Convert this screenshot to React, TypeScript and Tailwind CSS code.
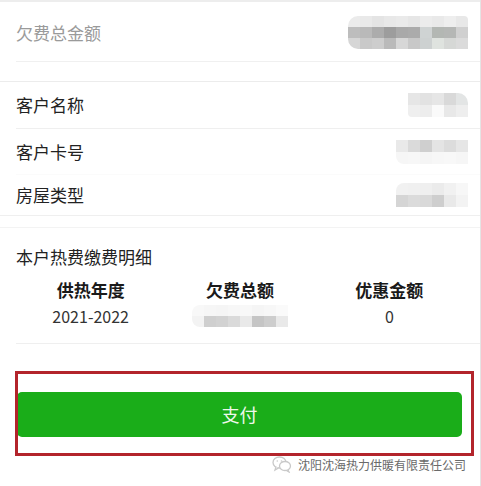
import React from "react";

type Mos = { rows: string[][]; cw: number; ch: number; round?: string };

const total: Mos = {
  cw: 12,
  ch: 11,
  round: "rounded-l-[10px] rounded-tr-[4px]",
  rows: [
    ["#ebebeb", "#e9e9e9", "#e4e4e4", "#e8e8e8", "#eaeaea", "#e6e6e6", "#ececec", "#e9e9e9", "#eeeeee", "#e8e8e8"],
    ["#bdbdbd", "#b9b9b9", "#acacac", "#9d9d9d", "#a9a9a9", "#ababab", "#cfd3d3", "#b3b7b3", "#b5b7b5", "#d0d0d0"],
    ["#d6d6d6", "#c9c9c9", "#cdcdcd", "#bababa", "#d7d7d7", "#c8c8c8", "#cdd1d1", "#dfe3df", "#d6d8d6", "#dbdbdb"],
  ],
};

const name: Mos = {
  cw: 12,
  ch: 12,
  round: "rounded-tr-[10px] rounded-bl-[4px]",
  rows: [
    ["#e6e6e6", "#e2e2e2", "#e6e6e6", "#d9d9d9", "#e3e5e5"],
    ["#efefef", "#ededed", "#fafafa", "#e8e8e8", "#eeeeee"],
  ],
};

const card: Mos = {
  cw: 12,
  ch: 12,
  round: "rounded-bl-[8px]",
  rows: [
    ["#e9e9e9", "#dadada", "#cfcfcf", "#e4e4e4", "#dcdcdc", "#e6e6e6"],
    ["#f6f6f6", "#f7f7f7", "#f5f5f5", "#f7f7f7", "#f8f8f8", "#f6f6f6"],
  ],
};

const house: Mos = {
  cw: 12,
  ch: 12,
  round: "rounded-tl-[8px]",
  rows: [
    ["#f1f1f1", "#f0f0f0", "#efefef", "#ebebeb", "#f1f1f1", "#f7f7f7"],
    ["#d5d5d5", "#dbdbdb", "#d9d9d9", "#cecece", "#e9e9e9", "#f3f3f3"],
  ],
};

const owed: Mos = {
  cw: 12,
  ch: 11,
  round: "rounded-l-[8px]",
  rows: [
    ["#f8f8f8", "#f6f6f6", "#f5f5f5", "#f7f7f7", "#f8f8f8", "#f5f5f5", "#f7f7f7", "#fafafa"],
    ["#f3f3f3", "#cfcfcf", "#d2d2d2", "#dadada", "#e9e9e9", "#c5c5c5", "#cdcdcd", "#e9e9e9"],
  ],
};

function Mosaic({ m }: { m: Mos }) {
  return (
    <div className={`flex flex-col overflow-hidden ${m.round ?? ""}`}>
      {m.rows.map((r, i) => (
        <div key={i} className="flex">
          {r.map((c, j) => (
            <span key={j} style={{ backgroundColor: c, width: m.cw, height: m.ch }} />
          ))}
        </div>
      ))}
    </div>
  );
}

function Row({ label, m, h, pt = 0, muted }: { label: string; m: Mos; h: number; pt?: number; muted?: boolean }) {
  return (
    <div
      className={`flex items-center justify-between pl-4 pr-3 text-[17px] ${muted ? "text-[#9a9a9a]" : "text-[#222]"}`}
      style={{ height: h, paddingTop: pt }}
    >
      <span>{label}</span>
      <Mosaic m={m} />
    </div>
  );
}

function WechatMark() {
  return (
    <svg width="20" height="17" viewBox="0 0 20 17" fill="none" stroke="#c9c9c9" strokeWidth="1.3">
      <ellipse cx="7.5" cy="6.5" rx="6.5" ry="5.5" fill="#fff" />
      <path d="M4 11 L3 14 L6.5 12" fill="#fff" />
      <ellipse cx="13" cy="10" rx="5.5" ry="4.5" fill="#fff" />
      <path d="M16 14 L17 16 L14 14.3" />
      <circle cx="5.3" cy="5" r="0.8" fill="#c9c9c9" stroke="none" />
      <circle cx="9.5" cy="5" r="0.8" fill="#c9c9c9" stroke="none" />
    </svg>
  );
}

export default function App() {
  return (
    <div className="relative w-[481px] h-[486px] overflow-hidden bg-white border-r border-[#e4e4e4] font-['Noto_Sans_CJK_SC','Noto_Sans',sans-serif]">
      <div className="border-t-2 border-[#ededed]" />

      <Row label="欠费总金额" m={total} h={59} pt={2} muted />
      <div className="ml-4 h-px bg-[#f0f0f0]" />
      <div className="h-[19px]" />
      <div className="h-px bg-[#ececec]" />

      <Row label="客户名称" m={name} h={46} />
      <div className="ml-4 h-px bg-[#efefef]" />
      <Row label="客户卡号" m={card} h={45} />
      <div className="ml-4 h-px bg-[#fbfbfb]" />
      <Row label="房屋类型" m={house} h={40} />
      <div className="h-px bg-[#efefef]" />
      <div className="h-[11px]" />
      <div className="h-px bg-[#f3f3f3]" />

      <div className="pl-4 pt-[17px] text-[17px] leading-[24px] text-[#222]">本户热费缴费明细</div>
      <div className="grid grid-cols-3 px-4 pt-[9px] text-center">
        <span className="text-[17px] leading-[24px] font-bold text-[#1a1a1a]">供热年度</span>
        <span className="text-[17px] leading-[24px] font-bold text-[#1a1a1a]">欠费总额</span>
        <span className="text-[17px] leading-[24px] font-bold text-[#1a1a1a]">优惠金额</span>
        <span className="text-[16px] leading-[28px] text-[#333]">2021-2022</span>
        <span className="flex items-center justify-center h-[28px]">
          <Mosaic m={owed} />
        </span>
        <span className="text-[16px] leading-[28px] text-[#333]">0</span>
      </div>
      <div className="ml-4 mt-[13px] h-px bg-[#efefef]" />

      <div className="mt-[48px] ml-[17px] mr-[18px] h-[45px] rounded-[5px] bg-[#1aad19] flex items-center justify-center text-[18px] text-[#eef8ea]">
        支付
      </div>

      <div className="absolute left-[15px] top-[371px] w-[459px] h-[85px] border-[3px] border-[#b3242b]" />

      <div className="absolute left-[272px] top-[456px] flex items-center gap-[6px]">
        <WechatMark />
        <span className="text-[12px] leading-[16px] text-[#6a6a6a] [text-shadow:0_0_2px_#fff]">
          沈阳沈海热力供暖有限责任公司
        </span>
      </div>
    </div>
  );
}
